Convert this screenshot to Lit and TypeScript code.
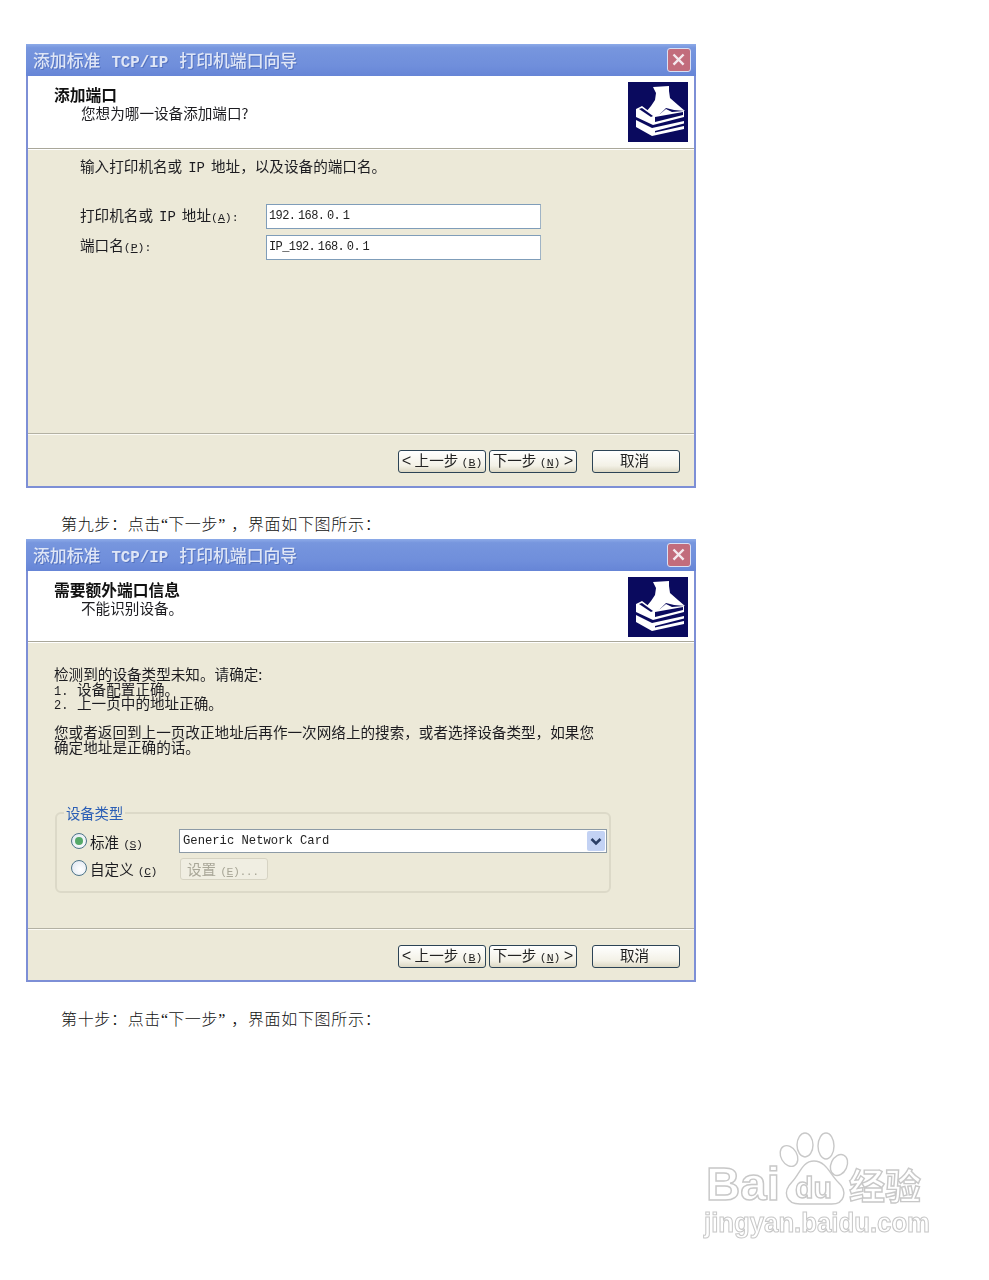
import { LitElement, html, css } from "lit";
import { customElement } from "lit/decorators.js";

const CJK = css`"Noto Sans CJK SC", "Liberation Sans", sans-serif`;

@customElement("wizard-dialog")
class WizardDialog extends LitElement {
  static styles = css`
    :host { display: block; width: 670px; font-family: ${CJK}; color: #1c1c20; }
    .win { box-sizing: border-box; width: 670px; display: flex; flex-direction: column; background: #ece9d8;
      border: 2px solid #7d8fd6; border-top: 0; border-bottom-width: 2px; filter: blur(0.35px); }
    .title { height: 32px; margin: 0 -2px; padding: 0 5px 2px 7px; box-sizing: border-box; display: flex; align-items: center; justify-content: space-between; flex: none;
      background: linear-gradient(#8dabe8 0, #7796de 12%, #6f8edb 70%, #6685d6 100%); color: #dfe6f6; font-size: 16.85px; font-weight: 500; white-space: nowrap;
      text-shadow: 1px 1px 0 #5573c0; }
    .lat { font-family: "Liberation Mono", monospace; font-size: 15.8px; font-weight: 700; margin: 0 11px; }
    .close { width: 24px; height: 24px; box-sizing: border-box; border: 1px solid #d9e0f4; border-radius: 3px; background: #c26c7c; display: block; margin-top: 2px; }
    .head { box-sizing: border-box; background: #fff; padding: 9px 6px 0 26px; display: flex; justify-content: space-between; flex: none; border-bottom: 1px solid #a9a79a; box-shadow: 0 1px 0 #fff; }
    .head h1 { margin: 0; font-size: 15.75px; line-height: 19px; font-weight: 700; color: #111; }
    .head p { margin: 0 0 0 27px; font-size: 14.6px; line-height: 18px; }
    .logo { width: 60px; height: 60px; margin-top: -3px; display: block; }
    .body { flex: 1; min-height: 0; }
    .foot { flex: none; box-sizing: border-box; border-top: 1px solid #b3b1a3; box-shadow: inset 0 1px 0 #fbfaf4; padding: 16px 13px 0 370px; display: flex; }
    .btn { box-sizing: border-box; width: 88px; height: 23px; border: 1px solid #2c4355; border-radius: 3px; background: linear-gradient(#fff, #f3f1e6 70%, #dcd8c4);
      font-size: 14.6px; line-height: 18px; text-align: center; color: #222; white-space: nowrap; }
    .btn + .btn { margin-left: 3px; }
    .btn.cancel { margin-left: 15px; padding-right: 3px; }
    .m { font-family: "Liberation Mono", monospace; font-size: 11.5px; }
    .ch { font-family: "Liberation Mono", monospace; font-size: 16px; line-height: 16px; font-weight: 400; }
    u { text-underline-offset: 1px; }
  `;
  static properties = { heading: {}, sub: {}, headH: { type: Number }, h: { type: Number }, footH: { type: Number } };
  declare heading: string;
  declare sub: string;
  declare headH: number;
  declare h: number;
  declare footH: number;
  constructor() {
    super();
    this.heading = "";
    this.sub = "";
    this.headH = 73;
    this.h = 444;
    this.footH = 53;
  }
  render() {
    return html`<div class="win" style="height:${this.h}px">
      <div class="title"><span>添加标准<span class="lat">TCP/IP</span>打印机端口向导</span>
        <svg class="close" viewBox="0 0 24 24"><path d="M6 6 17 17M17 6 6 17" stroke="#f4e9ee" stroke-width="2.6" fill="none"/></svg></div>
      <div class="head" style="height:${this.headH}px">
        <div><h1>${this.heading}</h1><p>${this.sub}</p></div>
        <svg class="logo" viewBox="0 0 60 60">
          <rect width="60" height="60" fill="#0a0a5e"/>
          <path d="M25 5 L41 4 L41 9 L42 16 L50 23 L57 29 L46 28 L38 26 L32 32 L26 36 L18 30 L23 24 L27 18 L28 11 Z" fill="#fff"/>
          <path d="M8 27 L14 24 L26 33 L32 32 L38 27 L44 30 L56 29 L56 35 L25 43 L8 35 Z" fill="#fff"/>
          <path d="M27 35 L55 30 L55 33 L27 40 Z" fill="#0a0a5e"/>
          <path d="M11 27 L14 26 L25 34 L23 35 Z" fill="#0a0a5e"/>
          <path d="M8 38 L24 46 L56 39 L56 41.500 L27 49 L27 50.500 L56 44 L56 47 L24 54 L8 45 Z" fill="#fff"/>
        </svg>
      </div>
      <div class="body"><slot></slot></div>
      <div class="foot" style="height:${this.footH}px">
        <div class="btn"><span class="ch">&lt;</span> 上一步 <span class="m">(<u>B</u>)</span></div>
        <div class="btn">下一步 <span class="m">(<u>N</u>)</span> <span class="ch">&gt;</span></div>
        <div class="btn cancel">取消</div>
      </div>
    </div>`;
  }
}

@customElement("app-root")
class AppRoot extends LitElement {
  static styles = css`
    :host { display: block; position: relative; width: 989px; height: 1280px; background: #fff; overflow: hidden; font-family: ${CJK}; color: #1c1c20; }
    .page { padding: 44px 0 0 26px; }
    .cap { margin: 0; height: 51px; box-sizing: border-box; padding: 25px 0 0 35px; font-size: 16px; line-height: 20px; font-weight: 300; letter-spacing: 0.67px; color: #111; white-space: nowrap; }
    .cap.last { padding-top: 26px; }
    .q { font-family: "Liberation Serif", serif; letter-spacing: 0; }
    .cm { margin-left: 6px; }
    .soft { font-size: 14.6px; filter: blur(0.35px); }
    .lat { font-family: "Liberation Mono", monospace; font-size: 14px; margin: 0 6px; }
    .m { font-family: "Liberation Mono", monospace; font-size: 11.5px; }
    .gap { margin-left: 4px; letter-spacing: -0.5px; }
    .b1 { padding: 7px 0 0 52px; }
    .b1 p { margin: 0 0 26px; line-height: 20px; }
    .form { display: grid; grid-template-columns: 186px 275px; grid-auto-rows: 25px; row-gap: 6px; align-items: center; }
    .lb { margin-top: -3px; line-height: 20px; white-space: nowrap; }
    .lb.first { margin-top: 0; }
    .fld { box-sizing: border-box; height: 25px; background: #fff; border: 1px solid #7f9db9; border-right-color: #9fb3c5; padding-left: 2px;
      font-family: "Liberation Mono", monospace; font-size: 12px; line-height: 23px; color: #222; letter-spacing: -0.6px; word-spacing: -4px; white-space: pre; }
    .b2 { padding: 25px 0 0 26px; }
    .ln { height: 14.5px; line-height: 14.5px; white-space: pre; }
    .num { font-family: "Liberation Mono", monospace; font-size: 12px; display: inline-block; width: 23px; }
    fieldset { box-sizing: border-box; min-width: 0; width: 556px; height: 88px; margin: 51px 0 0 1px; padding: 7px 2px 0 14px; border: 2px solid #dcd9c8; border-radius: 6px; }
    legend { padding: 0 2px; margin-left: -7px; color: #2c5fb5; font-size: 14.3px; line-height: 16px; }
    .row { display: flex; align-items: center; height: 26px; }
    .row + .row { margin-top: 1px; }
    .radio { box-sizing: border-box; width: 16px; height: 16px; border-radius: 50%; border: 1px solid #4c7388; background: radial-gradient(circle at 60% 60%, #fff, #dce4ef); display: flex; align-items: center; justify-content: center; flex: none; }
    .radio i { width: 8px; height: 8px; border-radius: 50%; background: #55a868; }
    .lbl { width: 89px; margin-left: 3px; flex: none; white-space: nowrap; }
    .combo { box-sizing: border-box; width: 428px; height: 24px; flex: none; background: #fff; border: 1px solid #8c9aa6; padding: 0 1px 0 3px; display: flex; align-items: center; justify-content: space-between;
      font-family: "Liberation Mono", monospace; font-size: 12.2px; color: #222; white-space: pre; }
    .arrow { width: 18px; height: 20px; background: #c3d2f4; border-radius: 2px; display: block; }
    .dis { box-sizing: border-box; width: 88px; height: 22px; margin: 2px 0 0 1px; border: 1px solid #d6d3c3; border-radius: 3px; background: #f0eee2; color: #a9a798; text-align: left; padding-left: 6px; line-height: 19px; white-space: nowrap; font-size: 14.6px; }
    .wm { position: absolute; left: 690px; top: 1120px; width: 260px; height: 130px; filter: blur(0.6px); }
    .wm text { fill: #fff; stroke: #c8c8c8; stroke-width: 1.4; }
    .wm .a { font-family: "Liberation Sans", sans-serif; font-weight: 700; font-size: 46px; }
    .wm .d { font-family: "Liberation Sans", sans-serif; font-weight: 700; font-size: 30px; }
    .wm .c { font-family: ${CJK}; font-weight: 700; font-size: 36px; }
    .wm .u { font-family: "Liberation Sans", sans-serif; font-weight: 700; font-size: 28px; stroke-width: 1.1; }
  `;
  caption(step: string, cls = "") {
    return html`<p class="cap ${cls}">第${step}步：点击<span class="q">“</span>下一步<span class="q">”</span><span class="cm">，</span>界面如下图所示：</p>`;
  }
  render() {
    return html`<div class="page">
      <wizard-dialog heading="添加端口" sub="您想为哪一设备添加端口?" .headH=${73} .h=${444}>
        <div class="soft b1">
          <p>输入打印机名或<span class="lat">IP</span>地址，以及设备的端口名。</p>
          <div class="form">
            <div class="lb first">打印机名或<span class="lat">IP</span>地址<span class="m">(<u>A</u>):</span></div>
            <div class="fld">192. 168. 0. 1</div>
            <div class="lb">端口名<span class="m">(<u>P</u>):</span></div>
            <div class="fld">IP_192. 168. 0. 1</div>
          </div>
        </div>
      </wizard-dialog>
      ${this.caption("九")}
      <wizard-dialog heading="需要额外端口信息" sub="不能识别设备。" .headH=${71} .h=${443} .footH=${52}>
        <div class="soft b2">
          <div class="ln">检测到的设备类型未知。请确定:</div>
          <div class="ln"><span class="num">1.</span>设备配置正确。</div>
          <div class="ln"><span class="num">2.</span>上一页中的地址正确。</div>
          <div class="ln"> </div>
          <div class="ln">您或者返回到上一页改正地址后再作一次网络上的搜索，或者选择设备类型，如果您</div>
          <div class="ln">确定地址是正确的话。</div>
          <fieldset>
            <legend>设备类型</legend>
            <div class="row"><span class="radio"><i></i></span><span class="lbl">标准<span class="m gap">(<u>S</u>)</span></span>
              <div class="combo">Generic Network Card<svg class="arrow" viewBox="0 0 18 20"><path d="M4.500 8 9 12.500 13.500 8" stroke="#2b3f66" stroke-width="2.6" fill="none"/></svg></div></div>
            <div class="row"><span class="radio"></span><span class="lbl">自定义<span class="m gap">(<u>C</u>)</span></span>
              <div class="dis">设置<span class="m gap">(<u>E</u>)...</span></div></div>
          </fieldset>
        </div>
      </wizard-dialog>
      ${this.caption("十", "last")}
    </div>
    <svg class="wm" viewBox="0 0 260 130">
      <g fill="#fff" stroke="#c8c8c8" stroke-width="1.4">
        <ellipse cx="99" cy="36" rx="8" ry="11" transform="rotate(-30 99 36)"/>
        <ellipse cx="115" cy="25" rx="8" ry="12"/>
        <ellipse cx="136" cy="26" rx="8" ry="13"/>
        <ellipse cx="149" cy="45" rx="8" ry="11" transform="rotate(25 149 45)"/>
        <path d="M124 41 C136 41 140 54 148 62 C158 71 155 85 140 84 L110 84 C96 84 92 72 102 62 C110 54 112 41 124 41 Z"/>
      </g>
      <text class="a" x="16" y="80" textLength="74" lengthAdjust="spacingAndGlyphs">Bai</text>
      <text class="d" x="105" y="78" textLength="37" lengthAdjust="spacingAndGlyphs">du</text>
      <text class="c" x="159" y="80">经验</text>
      <text class="u" x="14" y="112" textLength="226" lengthAdjust="spacingAndGlyphs">jingyan.baidu.com</text>
    </svg>`;
  }
}
